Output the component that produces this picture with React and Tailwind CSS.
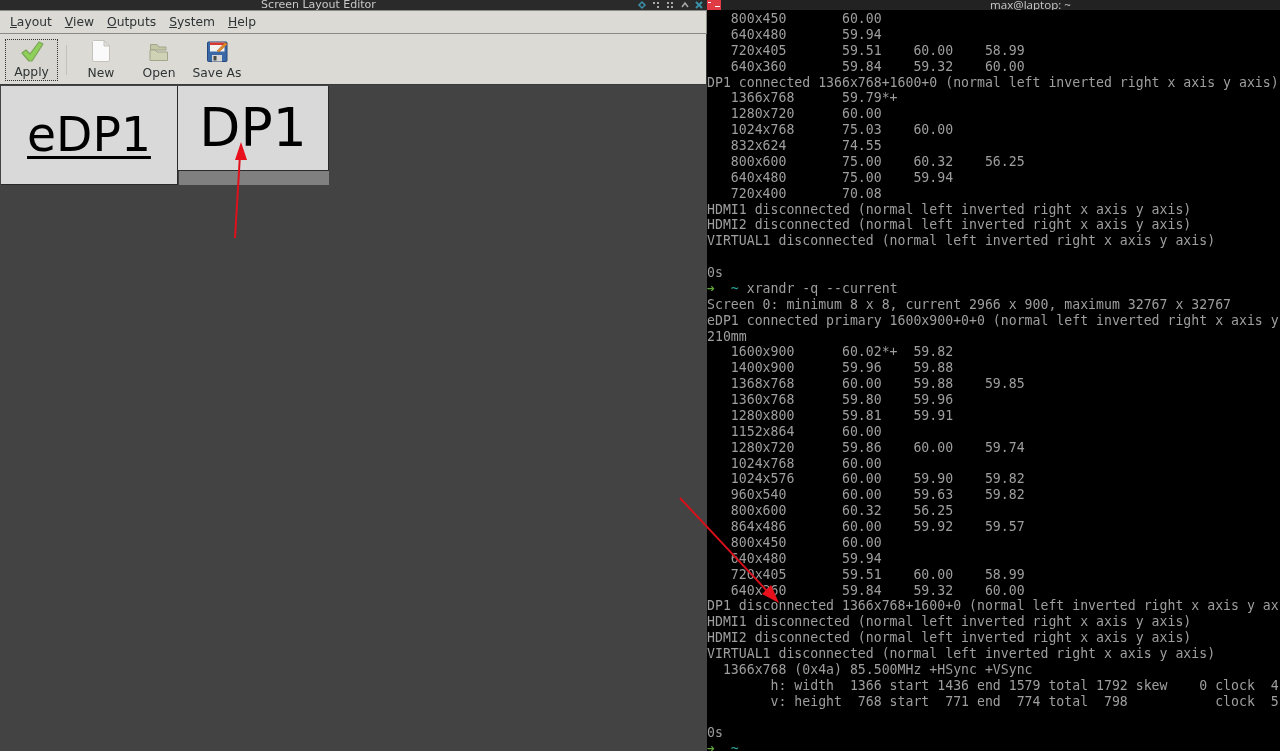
import React from "react";

const L = [
  "   800x450      60.00",
  "   640x480      59.94",
  "   720x405      59.51    60.00    58.99",
  "   640x360      59.84    59.32    60.00",
  "DP1 connected 1366x768+1600+0 (normal left inverted right x axis y axis)",
  "   1366x768      59.79*+",
  "   1280x720      60.00",
  "   1024x768      75.03    60.00",
  "   832x624       74.55",
  "   800x600       75.00    60.32    56.25",
  "   640x480       75.00    59.94",
  "   720x400       70.08",
  "HDMI1 disconnected (normal left inverted right x axis y axis)",
  "HDMI2 disconnected (normal left inverted right x axis y axis)",
  "VIRTUAL1 disconnected (normal left inverted right x axis y axis)",
  " ",
  "0s",
  "PROMPT1",
  "Screen 0: minimum 8 x 8, current 2966 x 900, maximum 32767 x 32767",
  "eDP1 connected primary 1600x900+0+0 (normal left inverted right x axis y",
  "210mm",
  "   1600x900      60.02*+  59.82",
  "   1400x900      59.96    59.88",
  "   1368x768      60.00    59.88    59.85",
  "   1360x768      59.80    59.96",
  "   1280x800      59.81    59.91",
  "   1152x864      60.00",
  "   1280x720      59.86    60.00    59.74",
  "   1024x768      60.00",
  "   1024x576      60.00    59.90    59.82",
  "   960x540       60.00    59.63    59.82",
  "   800x600       60.32    56.25",
  "   864x486       60.00    59.92    59.57",
  "   800x450       60.00",
  "   640x480       59.94",
  "   720x405       59.51    60.00    58.99",
  "   640x360       59.84    59.32    60.00",
  "DP1 disconnected 1366x768+1600+0 (normal left inverted right x axis y ax",
  "HDMI1 disconnected (normal left inverted right x axis y axis)",
  "HDMI2 disconnected (normal left inverted right x axis y axis)",
  "VIRTUAL1 disconnected (normal left inverted right x axis y axis)",
  "  1366x768 (0x4a) 85.500MHz +HSync +VSync",
  "        h: width  1366 start 1436 end 1579 total 1792 skew    0 clock  4",
  "        v: height  768 start  771 end  774 total  798           clock  5",
  " ",
  "0s",
  "PROMPT2",
];

const LINES = L.map((s) => {
  const m = s.match(/^   (\d+x\d+)\s+(.*)$/);
  if (!m) return s;
  return ("   " + m[1]).padEnd(17, " ") + m[2];
});

function Check() {
  return (
    <svg width="24" height="22" viewBox="0 0 24 22">
      <path d="M2 12 L6 9 L10 13 L19 1 L23 3 L12 20 L9 20 Z" fill="#8fd05a" stroke="#7aa457" strokeWidth="1.2" strokeLinejoin="round" />
    </svg>
  );
}
function Doc() {
  return (
    <svg width="20" height="22" viewBox="0 0 20 22">
      <path d="M2.5 0.5 H13 L18.5 6 V20 Q18.5 21.5 17 21.5 H3 Q1.5 21.5 1.5 20 V1.5 Z" fill="#fafafa" stroke="#c4c4bd" />
      <path d="M13 0.5 V6 H18.5 Z" fill="#e2e2dc" stroke="#c4c4bd" />
    </svg>
  );
}
function Folder() {
  return (
    <svg width="20" height="20" viewBox="0 0 20 20">
      <path d="M1.5 2.5 H8 L10 5 H17 V8 H1.5 Z" fill="#c4c6a6" stroke="#a3a58a" />
      <path d="M1 18.5 V8 H6 L8 10 H18.5 V18.5 Z" fill="#d0d2b6" stroke="#a3a58a" />
    </svg>
  );
}
function Floppy() {
  return (
    <svg width="21" height="21" viewBox="0 0 21 21">
      <rect x="0.5" y="1" width="19.5" height="19.5" rx="1" fill="#3a69a8" stroke="#27487a" />
      <rect x="3" y="1.5" width="14.5" height="9" fill="#f2f2ee" />
      <rect x="3" y="1.5" width="14.5" height="2.5" fill="#d8392e" />
      <rect x="5" y="14" width="10" height="6.5" fill="#d6d6d2" />
      <rect x="6.5" y="15" width="3" height="4.5" fill="#4a4a4a" />
      <path d="M10 10 L18 1.5 L20.5 3 L12 11 Z" fill="#e08a2e" stroke="#a85f1a" strokeWidth="0.5" />
    </svg>
  );
}

function ToolButton({ icon, label, className }) {
  return (
    <div className={"flex flex-col items-center justify-between " + className}>
      <div className="h-[22px] flex items-end justify-center">{icon}</div>
      <span className="text-[12.3px] leading-[16px] text-[#2e3436]">{label}</span>
    </div>
  );
}

function Menu({ u, rest }) {
  return (
    <span className="text-[12.3px] text-[#2e3436]">
      <span className="underline">{u}</span>
      {rest}
    </span>
  );
}

function Dots() {
  return (
    <svg width="82" height="10" viewBox="0 0 82 10" className="opacity-90">
      <path d="M6 2 L9 5 L6 8 L3 5 Z" fill="none" stroke="#3b9db5" strokeWidth="1.5" />
      <g fill="#b8b8b8">
        <rect x="17" y="2" width="2" height="2" /><rect x="21" y="2" width="2" height="2" /><rect x="21" y="6" width="2" height="2" />
        <rect x="31" y="2" width="2" height="2" /><rect x="35" y="2" width="2" height="2" /><rect x="31" y="6" width="2" height="2" /><rect x="35" y="6" width="2" height="2" />
      </g>
      <path d="M46 7 L49 3 L52 7" fill="none" stroke="#b8b8b8" strokeWidth="1.5" />
      <path d="M60 2 L66 8 M66 2 L60 8" stroke="#3b9db5" strokeWidth="2" />
    </svg>
  );
}

export default function App() {
  return (
    <div className="relative flex w-[1280px] h-[751px] overflow-hidden bg-black blur-[0.35px]" style={{ fontFamily: '"DejaVu Sans", sans-serif' }}>
      <div className="flex flex-col w-[707px] shrink-0 bg-[#434343]">
        <div className="relative h-[10px] shrink-0 bg-[#2a2a2a] overflow-hidden flex items-center justify-center">
          <span className="text-[11px] leading-[10px] -mt-[1px] ml-[-70px] text-[#c8c8c8]">Screen Layout Editor</span>
          <div className="absolute right-[-11px] top-0"><Dots /></div>
        </div>
        <div className="h-[24px] shrink-0 flex items-center gap-[13px] pl-[10px] bg-[#dcdad5] border-y border-r border-[#8a8a86]">
          <Menu u="L" rest="ayout" />
          <Menu u="V" rest="iew" />
          <Menu u="O" rest="utputs" />
          <Menu u="S" rest="ystem" />
          <Menu u="H" rest="elp" />
        </div>
        <div className="h-[51px] shrink-0 flex items-stretch pl-[5px] pt-[5px] pb-[3px] bg-[#dcdad5] border-r border-b border-[#3a3a3a]">
          <ToolButton icon={<Check />} label="Apply" className="w-[53px] border border-dotted border-[#333] bg-[#d8d6d0] pt-[1px]" />
          <div className="w-[1px] my-[6px] ml-[8px] bg-[#c4c2bc]" />
          <ToolButton icon={<Doc />} label="New" className="w-[42px] ml-[13px] pt-[1px]" />
          <ToolButton icon={<Folder />} label="Open" className="w-[48px] ml-[13px] pt-[1px]" />
          <ToolButton icon={<Floppy />} label="Save As" className="w-[58px] ml-[5px] pt-[1px]" />
        </div>
        <div className="relative flex-1 bg-[#434343]">
          <div className="absolute left-[1px] top-[0.5px] w-[177px] h-[99px] bg-[#d9d9d9] border-r border-b border-[#2a2a2a] flex items-center justify-center">
            <span className="text-[47.2px] leading-[60px] text-black underline decoration-[2.5px] underline-offset-[5px]">eDP1</span>
          </div>
          <div className="absolute left-[178px] top-[0.5px] w-[151px] h-[85px] bg-[#d9d9d9] border-r border-b border-[#2a2a2a] flex items-center justify-center">
            <span className="text-[53.4px] leading-[70px] mt-[0px] text-black">DP1</span>
          </div>
          <div className="absolute left-[179px] top-[86px] w-[150px] h-[14px] bg-[#808080]" />
        </div>
      </div>
      <div className="flex flex-col flex-1 min-w-0">
        <div className="relative h-[10px] shrink-0 bg-[#222222] overflow-hidden flex items-center justify-center">
          <span className="text-[11.6px] leading-[10px] -mt-[1px] ml-[74px] text-[#c8c8c8]" style={{ fontFamily: '"Open Sans", sans-serif' }}>max@laptop: ~</span>
          <div className="absolute left-0 top-0 w-[14px] h-[10px] bg-[#e03a45]">
            <div className="absolute left-[1px] top-[2px] w-[3px] h-[1px] bg-white" />
            <div className="absolute left-[8px] top-[6px] w-[5px] h-[1px] bg-white" />
          </div>
        </div>
        <div className="flex-1 pt-[1px] overflow-hidden text-[13.2px] leading-[15.89px] text-[#9e9e9e] whitespace-pre" style={{ fontFamily: '"DejaVu Sans Mono", monospace' }}>
          {LINES.map((s, i) => (
            <div key={i} className="h-[15.89px]">
              {s === "PROMPT1" ? (
                <>
                  <span className="text-[#5fa53a]">➜</span>
                  <span className="text-[#2aa198]">  ~</span> xrandr -q --current
                </>
              ) : s === "PROMPT2" ? (
                <>
                  <span className="text-[#5fa53a]">➜</span>
                  <span className="text-[#2aa198]">  ~</span>
                </>
              ) : (
                s
              )}
            </div>
          ))}
        </div>
      </div>
      <svg className="absolute left-0 top-0 pointer-events-none" width="1280" height="751" viewBox="0 0 1280 751">
        <line x1="235" y1="238" x2="240" y2="155" stroke="#e0101c" strokeWidth="2" />
        <path d="M241 142 L235 160 L247 160 Z" fill="#e8101c" />
        <line x1="680" y1="498" x2="768" y2="592" stroke="#d8101c" strokeWidth="2" />
        <path d="M779 603 L762 594 L771 585 Z" fill="#e8101c" />
      </svg>
    </div>
  );
}
